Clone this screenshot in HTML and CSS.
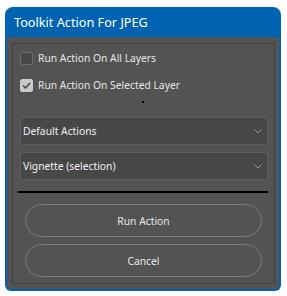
FILE: index.html
```html
<!DOCTYPE html>
<html>
<head>
<meta charset="utf-8">
<link rel="stylesheet" href="styles.css">
</head>
<body>
<div class="window">
  <div class="titlebar">Toolkit Action For JPEG</div>
  <div class="body">
    <div class="panel">
      <label class="check-row first">
        <span class="box"></span>
        <span class="label">Run Action On All Layers</span>
      </label>
      <label class="check-row second">
        <span class="box checked">
          <svg width="9" height="7" viewBox="0 0 9 7"><path d="M1 3.5 L3.5 6 L8 1" fill="none" stroke="#4a4a4a" stroke-width="1.6"/></svg>
        </span>
        <span class="label">Run Action On Selected Layer</span>
      </label>
      <div class="dot-row"><span class="dot"></span></div>
      <div class="select first-select">
        <span>Default Actions</span>
        <svg class="chev" width="8" height="5" viewBox="0 0 8 5"><path d="M0.5 0.5 L4 4 L7.5 0.5" fill="none" stroke="#9a9a9a" stroke-width="1"/></svg>
      </div>
      <div class="select second-select">
        <span>Vignette (selection)</span>
        <svg class="chev" width="8" height="5" viewBox="0 0 8 5"><path d="M0.5 0.5 L4 4 L7.5 0.5" fill="none" stroke="#9a9a9a" stroke-width="1"/></svg>
      </div>
      <div class="rule"></div>
      <button class="btn run">Run Action</button>
      <button class="btn cancel">Cancel</button>
    </div>
  </div>
</div>
</body>
</html>
```

FILE: styles.css
```css
html, body {
  margin: 0;
  padding: 0;
  background: #ffffff;
}
body {
  font-family: "Noto Sans", "Open Sans", sans-serif;
  font-size: 10.3px;
}
.window {
  margin: 7px 0 0 5px;
  width: 276px;
  height: 284px;
  box-sizing: border-box;
  background: #0063b1;
  border-radius: 8px 8px 6px 6px;
  padding: 0 2px 2px 2px;
  display: flex;
  flex-direction: column;
}
.titlebar {
  height: 30px;
  line-height: 30px;
  color: #ffffff;
  padding-left: 7px;
  font-size: 12.7px;
}
.body {
  flex: 1;
  background: #535353;
  border-radius: 0 0 4px 4px;
  padding: 6px 5px 5px 5px;
  display: flex;
}
.panel {
  flex: 1;
  border: 1px solid #3e3e3e;
  display: flex;
  flex-direction: column;
  padding: 0 6px 0 7px;
}
.check-row {
  display: flex;
  align-items: center;
  height: 13px;
  color: #e6e6e6;
}
.check-row.first { margin-top: 8px; }
.check-row.second { margin-top: 14px; }
.box {
  width: 13px;
  height: 13px;
  box-sizing: border-box;
  border: 1px solid #6c6c6c;
  background: #474747;
  border-radius: 2px;
  display: flex;
  align-items: center;
  justify-content: center;
}
.box.checked {
  background: #c9c9c9;
  border-color: #c9c9c9;
}
.label {
  margin-left: 5px;
  line-height: 13px;
}
.dot-row {
  height: 2px;
  margin-top: 9px;
  display: flex;
  padding-left: 122px;
}
.dot {
  width: 2px;
  height: 2px;
  background: #000;
}
.select {
  width: 248px;
  height: 28px;
  box-sizing: border-box;
  border: 1px solid #5e5e5e;
  background: #474747;
  border-radius: 2px;
  color: #f0f0f0;
  display: flex;
  align-items: center;
  justify-content: space-between;
  padding: 0 5px 0 2px;
}
.first-select { margin-top: 14px; }
.second-select { margin-top: 7px; }
.rule {
  width: 250px;
  height: 2px;
  background: #000;
  margin: 11px 0 0 -2px;
}
.btn {
  width: 237px;
  height: 33px;
  margin-left: 5px;
  border: 1px solid #7a7a7a;
  border-radius: 17px;
  background: #535353;
  color: #e8e8e8;
  font-family: "Noto Sans", "Open Sans", sans-serif;
  font-size: 10.3px;
  padding: 0;
}
.btn.run { margin-top: 11px; }
.btn.cancel { margin-top: 7px; }
```
